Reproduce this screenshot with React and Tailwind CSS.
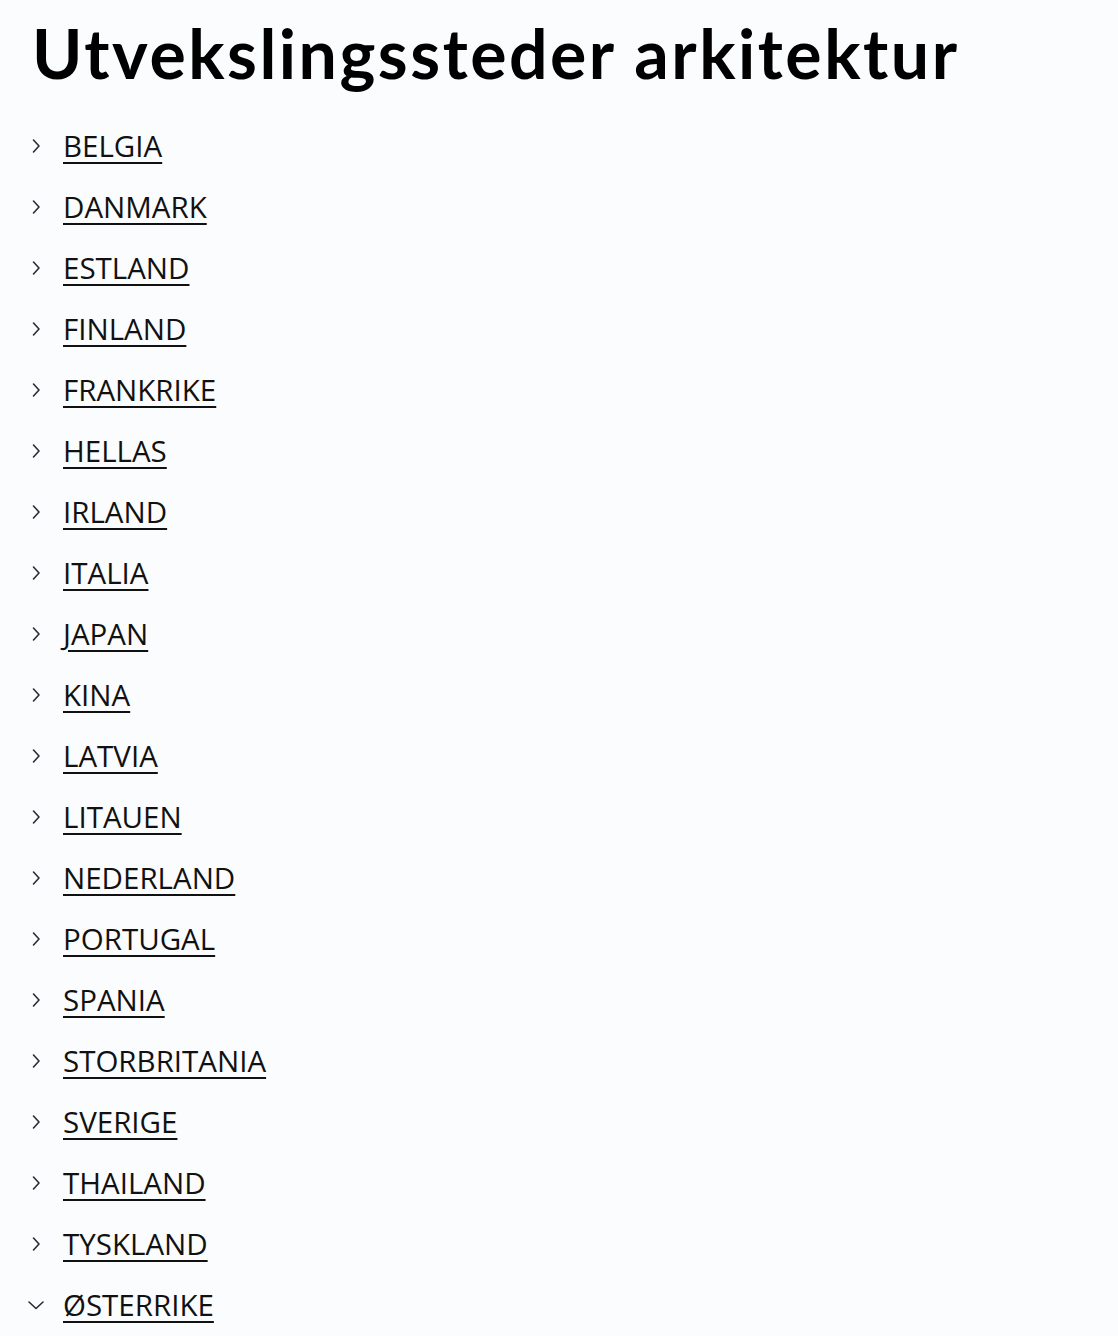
import React from 'react';

const countries = [
  'BELGIA', 'DANMARK', 'ESTLAND', 'FINLAND', 'FRANKRIKE', 'HELLAS', 'IRLAND',
  'ITALIA', 'JAPAN', 'KINA', 'LATVIA', 'LITAUEN', 'NEDERLAND', 'PORTUGAL',
  'SPANIA', 'STORBRITANIA', 'SVERIGE', 'THAILAND', 'TYSKLAND', 'ØSTERRIKE',
];

const ChevronRight = () => (
  <svg width="16" height="16" viewBox="0 0 16 16" fill="none" stroke="#2b2b33" strokeWidth="1.6" strokeLinecap="round" strokeLinejoin="round">
    <path d="M5.5 2 L11 8 L5.5 14" />
  </svg>
);

const ChevronDown = () => (
  <svg width="16" height="16" viewBox="0 0 16 16" fill="none" stroke="#2b2b33" strokeWidth="1.6" strokeLinecap="round" strokeLinejoin="round">
    <path d="M1 5 L8 11.5 L15 5" />
  </svg>
);

export default function App() {
  return (
    <div className="min-h-[1336px] w-full bg-[#fbfcfe] px-[28px] pt-[13px] font-['Open_Sans',sans-serif] text-[#111]">
      <h1 className="pl-[4px] font-['Lato',sans-serif] text-[68px] font-bold leading-[80px] tracking-[2.5px] text-black">
        Utvekslingssteder arkitektur
      </h1>
      <ul className="mt-[22px]">
        {countries.map((c, i) => {
          const open = i === countries.length - 1;
          return (
            <li key={c} className="flex h-[61px] items-center">
              <span className="flex w-[35px] items-center justify-start">
                {open ? <ChevronDown /> : <ChevronRight />}
              </span>
              <a href="#" className="text-[29.5px] leading-[40px] text-[#111] underline decoration-[2px] underline-offset-[5px]">
                {c}
              </a>
            </li>
          );
        })}
      </ul>
    </div>
  );
}
